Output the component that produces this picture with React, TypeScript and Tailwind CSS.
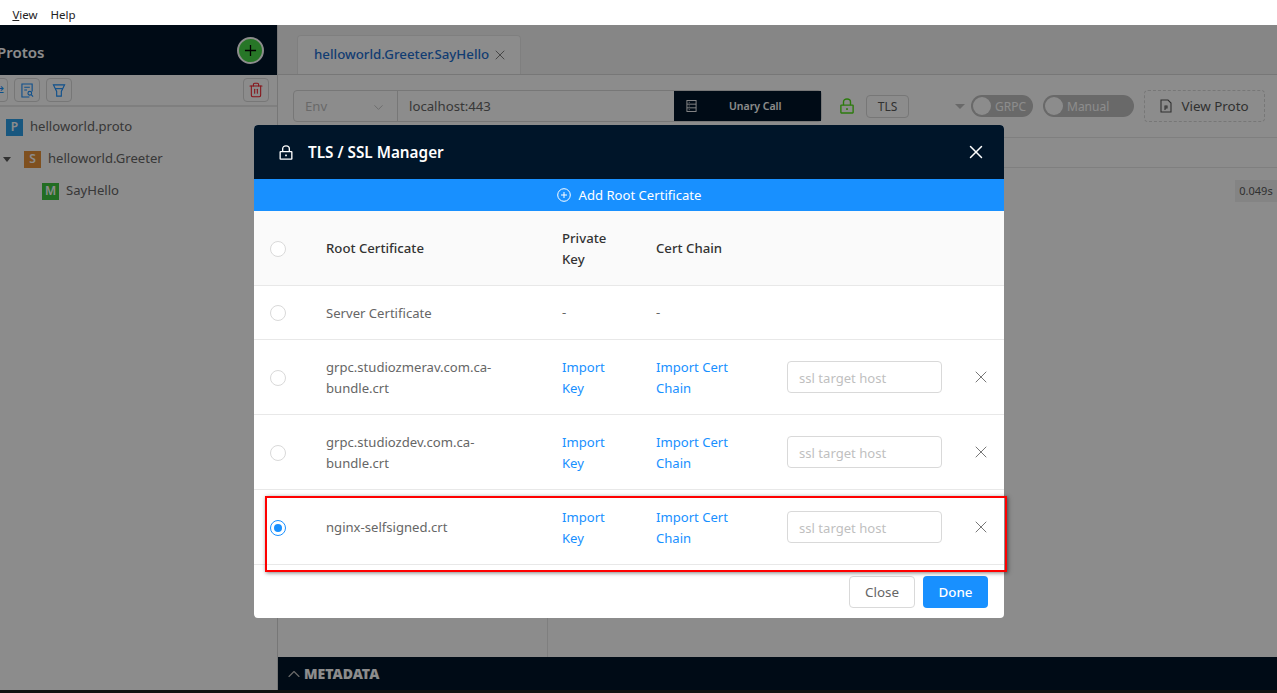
import React from "react";
import { ChevronDown, ChevronUp, Trash2, X } from "lucide-react";

const font = "font-['Noto_Sans',sans-serif]";

function LockIcon({ className }: { className: string }) {
  return (
    <svg viewBox="0 0 16 18" fill="none" stroke="currentColor" strokeWidth="1.6" className={className}>
      <rect x="1" y="8" width="14" height="9" rx="0.5" />
      <path d="M4 8V4.5C4 2.5 5.5 1 8 1s4 1.5 4 3.5V8" />
      <rect x="7" y="11.5" width="2" height="2" fill="currentColor" stroke="none" />
    </svg>
  );
}

function Badge({ letter, color }: { letter: string; color: string }) {
  return (
    <span className={`flex h-[17px] w-[17px] items-center justify-center text-xs font-semibold text-white ${color}`}>
      {letter}
    </span>
  );
}

function TreeRow({ className, children }: { className: string; children: React.ReactNode }) {
  return <div className={`flex h-8 items-center gap-[7px] text-[13.1px] text-[#666] ${className}`}>{children}</div>;
}

function Sidebar() {
  return (
    <aside className="flex w-[278px] shrink-0 flex-col border-r border-[#d9d9d9] bg-white">
      <div className="flex h-[50px] shrink-0 items-center justify-between bg-[#001529] pr-[13px]">
        <span className="-ml-[3px] mt-1 text-[15px] font-semibold text-white">Protos</span>
        <span className="flex h-[27px] w-[27px] items-center justify-center rounded-full border-2 border-white bg-[#48d848]">
          <svg viewBox="0 0 14 14" className="h-[13px] w-[13px]" stroke="#000" strokeWidth="1.4">
            <path d="M7 1v12M1 7h12" />
          </svg>
        </span>
      </div>
      <div className="flex h-8 shrink-0 items-center justify-between border-b-2 border-[#e8e8e8] pr-2">
        <div className="flex items-center gap-[6px]">
          <button className="-ml-[17px] flex h-6 w-[25px] items-center justify-end overflow-hidden rounded border border-[#d9d9d9] text-[#1890ff]">
            <span className="mr-[3px] text-xs leading-none">⇄</span>
          </button>
          <button className="flex h-6 w-[26px] items-center justify-center rounded border border-[#d9d9d9]">
            <svg viewBox="0 0 14 16" fill="none" stroke="#1890ff" strokeWidth="1.2" className="h-[15px] w-[13px]">
              <path d="M9 15H1V1h11v8" />
              <path d="M3.5 4.5h6M3.5 7.5h3" />
              <circle cx="9.5" cy="11" r="2" />
              <path d="M11 12.5l2 2" />
            </svg>
          </button>
          <button className="flex h-6 w-[26px] items-center justify-center rounded border border-[#d9d9d9]">
            <svg viewBox="0 0 14 14" fill="none" stroke="#1890ff" strokeWidth="1.2" className="h-[13px] w-[14px]">
              <path d="M1 1h12L9.5 8v5h-5V8z" />
              <path d="M3 5h8" />
            </svg>
          </button>
        </div>
        <button className="flex h-6 w-[26px] items-center justify-center rounded border border-[#d9d9d9] text-[#f5222d]">
          <Trash2 size={16} strokeWidth={1.6} />
        </button>
      </div>
      <div className="pt-1">
        <TreeRow className="pl-[6px]">
          <Badge letter="P" color="bg-[#2d9fe8]" />
          helloworld.proto
        </TreeRow>
        <TreeRow className="pl-[3px]">
          <span className="mr-[6px] h-0 w-0 border-x-[4px] border-t-[5px] border-x-transparent border-t-[#595959]" />
          <Badge letter="S" color="bg-[#e8923a]" />
          helloworld.Greeter
        </TreeRow>
        <TreeRow className="pl-[42px]">
          <Badge letter="M" color="bg-[#3fc63f]" />
          SayHello
        </TreeRow>
      </div>
    </aside>
  );
}

function Main() {
  return (
    <main className="flex min-w-0 flex-1 flex-col bg-white">
      <div className="flex h-[50px] shrink-0 items-end border-b border-[#d9d9d9] bg-[#f5f5f5] pl-[19px]">
        <div className="flex h-[39px] w-[224px] items-center gap-[3px] rounded-t border border-b-0 border-[#e8e8e8] bg-white pl-4">
          <span className="text-[13.3px] font-medium text-[#1f6fd0]">helloworld.Greeter.SayHello</span>
          <X size={16} strokeWidth={1.4} className="text-[#777]" />
        </div>
      </div>
      <div className="flex h-[63px] shrink-0 items-center border-b border-[#e8e8e8] pl-[15px]">
        <div className="flex h-8 w-[529px] rounded border border-[#d9d9d9] text-[13.2px]">
          <div className="flex w-[104px] items-center justify-between border-r border-[#d9d9d9] px-[11px] pt-[2px] text-[#bfbfbf]">
            Env
            <ChevronDown size={15} strokeWidth={1.4} />
          </div>
          <div className="flex flex-1 items-center pl-[11px] pt-[2px] text-[#666]">localhost:443</div>
          <div className="flex w-[147px] items-center bg-[#001529] pl-[12px] text-white">
            <svg viewBox="0 0 12 14" fill="none" stroke="currentColor" strokeWidth="1" className="h-[14px] w-[11px]">
              <rect x="1" y="1" width="10" height="12" />
              <path d="M1 5h10M1 9h10M3 3h1M3 7h1M3 11h1" />
            </svg>
            <span className="ml-[32px] pt-px text-[10.5px] font-semibold">Unary Call</span>
          </div>
        </div>
        <LockIcon className="ml-[18px] h-[16px] w-[14px] text-[#52e01a]" />
        <span className="ml-3 flex h-[23px] w-[43px] items-center justify-center rounded-sm border border-[#d9d9d9] pt-[2px] text-xs text-[#595959]">
          TLS
        </span>
        <span className="ml-[46px] h-0 w-0 border-x-[5px] border-t-[5px] border-x-transparent border-t-[#bfbfbf]" />
        <div className="ml-[6px] flex h-[22px] w-[62px] items-center rounded-full bg-[#bfbfbf] pl-[2px] text-xs text-white">
          <span className="h-[18px] w-[18px] rounded-full bg-white" />
          <span className="ml-[4px] pt-[2px]">GRPC</span>
        </div>
        <div className="ml-[10px] flex h-[22px] w-[91px] items-center rounded-full bg-[#bfbfbf] pl-[2px] text-xs text-white">
          <span className="h-[18px] w-[18px] rounded-full bg-white" />
          <span className="ml-[4px] pt-[2px]">Manual</span>
        </div>
        <div className="ml-[10px] flex h-8 w-[121px] items-center justify-center gap-[9px] rounded border border-dashed border-[#d9d9d9] text-[13.4px] text-[#595959]">
          <svg viewBox="0 0 12 14" fill="none" stroke="currentColor" strokeWidth="1.1" className="h-[14px] w-[12px]">
            <path d="M1 1h7l3 3v9H1z" />
            <path d="M5 11V7h2v2H5" />
          </svg>
          <span className="pt-px">View Proto</span>
        </div>
      </div>
      <div className="h-[30px] shrink-0 border-b border-[#e8e8e8]" />
      <div className="flex min-h-0 flex-1">
        <div className="w-[270px] border-r border-[#e8e8e8]" />
        <div className="flex flex-1 justify-end pt-3">
          <span className="flex h-[22px] w-[42px] items-center justify-center bg-[#f0f0f0] text-[11px] text-[#595959]">0.049s</span>
        </div>
      </div>
      <div className="flex h-[33px] shrink-0 items-center bg-[#001529] pl-[6px] text-sm font-black text-white">
        <ChevronUp size={20} strokeWidth={1.4} className="text-[#bfbfbf]" />
        METADATA
      </div>
    </main>
  );
}

const ROW_COLS = "grid grid-cols-[72px_236px_94px_131px_155px_1fr] items-center border-b border-[#e8e8e8]";

function Radio({ checked }: { checked?: boolean }) {
  return (
    <span className={`ml-4 mt-px flex h-4 w-4 items-center justify-center rounded-full border bg-white ${checked ? "border-[#1890ff]" : "border-[#d9d9d9]"}`}>
      {checked && <span className="h-2 w-2 rounded-full bg-[#1890ff]" />}
    </span>
  );
}

function CertRow({ name, checked }: { name: React.ReactNode; checked?: boolean }) {
  return (
    <div className={`${ROW_COLS} h-[75px] text-[13.1px] leading-[21px] text-[#666]`}>
      <Radio checked={checked} />
      <div className="pr-[40px] pt-px">{name}</div>
      <div className="pr-[40px] pt-px text-[#1890ff]">Import Key</div>
      <div className="pr-[50px] pt-px text-[#1890ff]">Import Cert Chain</div>
      <input
        placeholder="ssl target host"
        className="h-8 w-[155px] rounded border border-[#d9d9d9] px-[11px] pt-px text-[13.1px] placeholder:text-[#bfbfbf]"
      />
      <X size={20} strokeWidth={1.2} className="ml-[29px] text-[#777]" />
    </div>
  );
}

function TlsModal() {
  return (
    <div className="absolute left-[254px] top-[125px] flex h-[493px] w-[750px] flex-col overflow-hidden rounded bg-white">
      <div className="flex h-[54px] shrink-0 items-center justify-between bg-[#001529] pl-[25px] pr-[17px] text-white">
        <div className="flex items-center gap-[15px]">
          <LockIcon className="h-[15px] w-[14px]" />
          <span className="text-[15.3px] font-semibold">TLS / SSL Manager</span>
        </div>
        <X size={22} strokeWidth={1.6} />
      </div>
      <div className="flex h-8 shrink-0 items-center justify-center gap-2 bg-[#1890ff] text-[13.1px] text-white">
        <svg viewBox="0 0 14 14" fill="none" stroke="currentColor" strokeWidth="1" className="h-[14px] w-[14px]">
          <circle cx="7" cy="7" r="6.3" />
          <path d="M7 4v6M4 7h6" />
        </svg>
        <span className="pt-px">Add Root Certificate</span>
      </div>
      <div className={`${ROW_COLS} h-[75px] bg-[#fafafa] text-[13.2px] font-medium leading-[21px] text-[#333]`}>
        <Radio />
        <div>Root Certificate</div>
        <div className="pr-[40px] pt-px">Private Key</div>
        <div>Cert Chain</div>
      </div>
      <div className={`${ROW_COLS} h-[54px] text-[13.1px] text-[#666]`}>
        <Radio />
        <div className="pt-[2px]">Server Certificate</div>
        <div>-</div>
        <div>-</div>
      </div>
      <CertRow name="grpc.studiozmerav.com.ca-bundle.crt" />
      <CertRow name="grpc.studiozdev.com.ca-bundle.crt" />
      <CertRow name="nginx-selfsigned.crt" checked />
      <div className="flex flex-1 items-start justify-end gap-2 pr-4 pt-[11px] text-[13.4px]">
        <button className="h-8 w-[66px] rounded border border-[#d9d9d9] text-[#666]">Close</button>
        <button className="h-8 w-[65px] rounded bg-[#1890ff] font-medium text-white">Done</button>
      </div>
    </div>
  );
}

export default function App() {
  return (
    <div className={`relative flex h-[693px] w-[1277px] flex-col overflow-hidden bg-white ${font}`}>
      <div className="flex h-[25px] shrink-0 items-center gap-[13px] pl-[13px] pt-[5px] text-[11.5px] text-[#222]">
        <span className="-ml-[32px]">File</span>
        <span>
          <span className="underline">V</span>iew
        </span>
        <span>Help</span>
      </div>
      <div className="flex h-[665px] shrink-0">
        <Sidebar />
        <Main />
      </div>
      <div className="h-[3px] shrink-0 bg-[#222]" />
      <div className="absolute inset-x-0 bottom-0 top-[25px] bg-black/45" />
      <TlsModal />
      <div className="absolute left-[265px] top-[496px] h-[76px] w-[742px] border-2 border-[#ff0000] shadow-[1px_1px_4px_rgba(0,0,0,0.5)]" />
    </div>
  );
}
